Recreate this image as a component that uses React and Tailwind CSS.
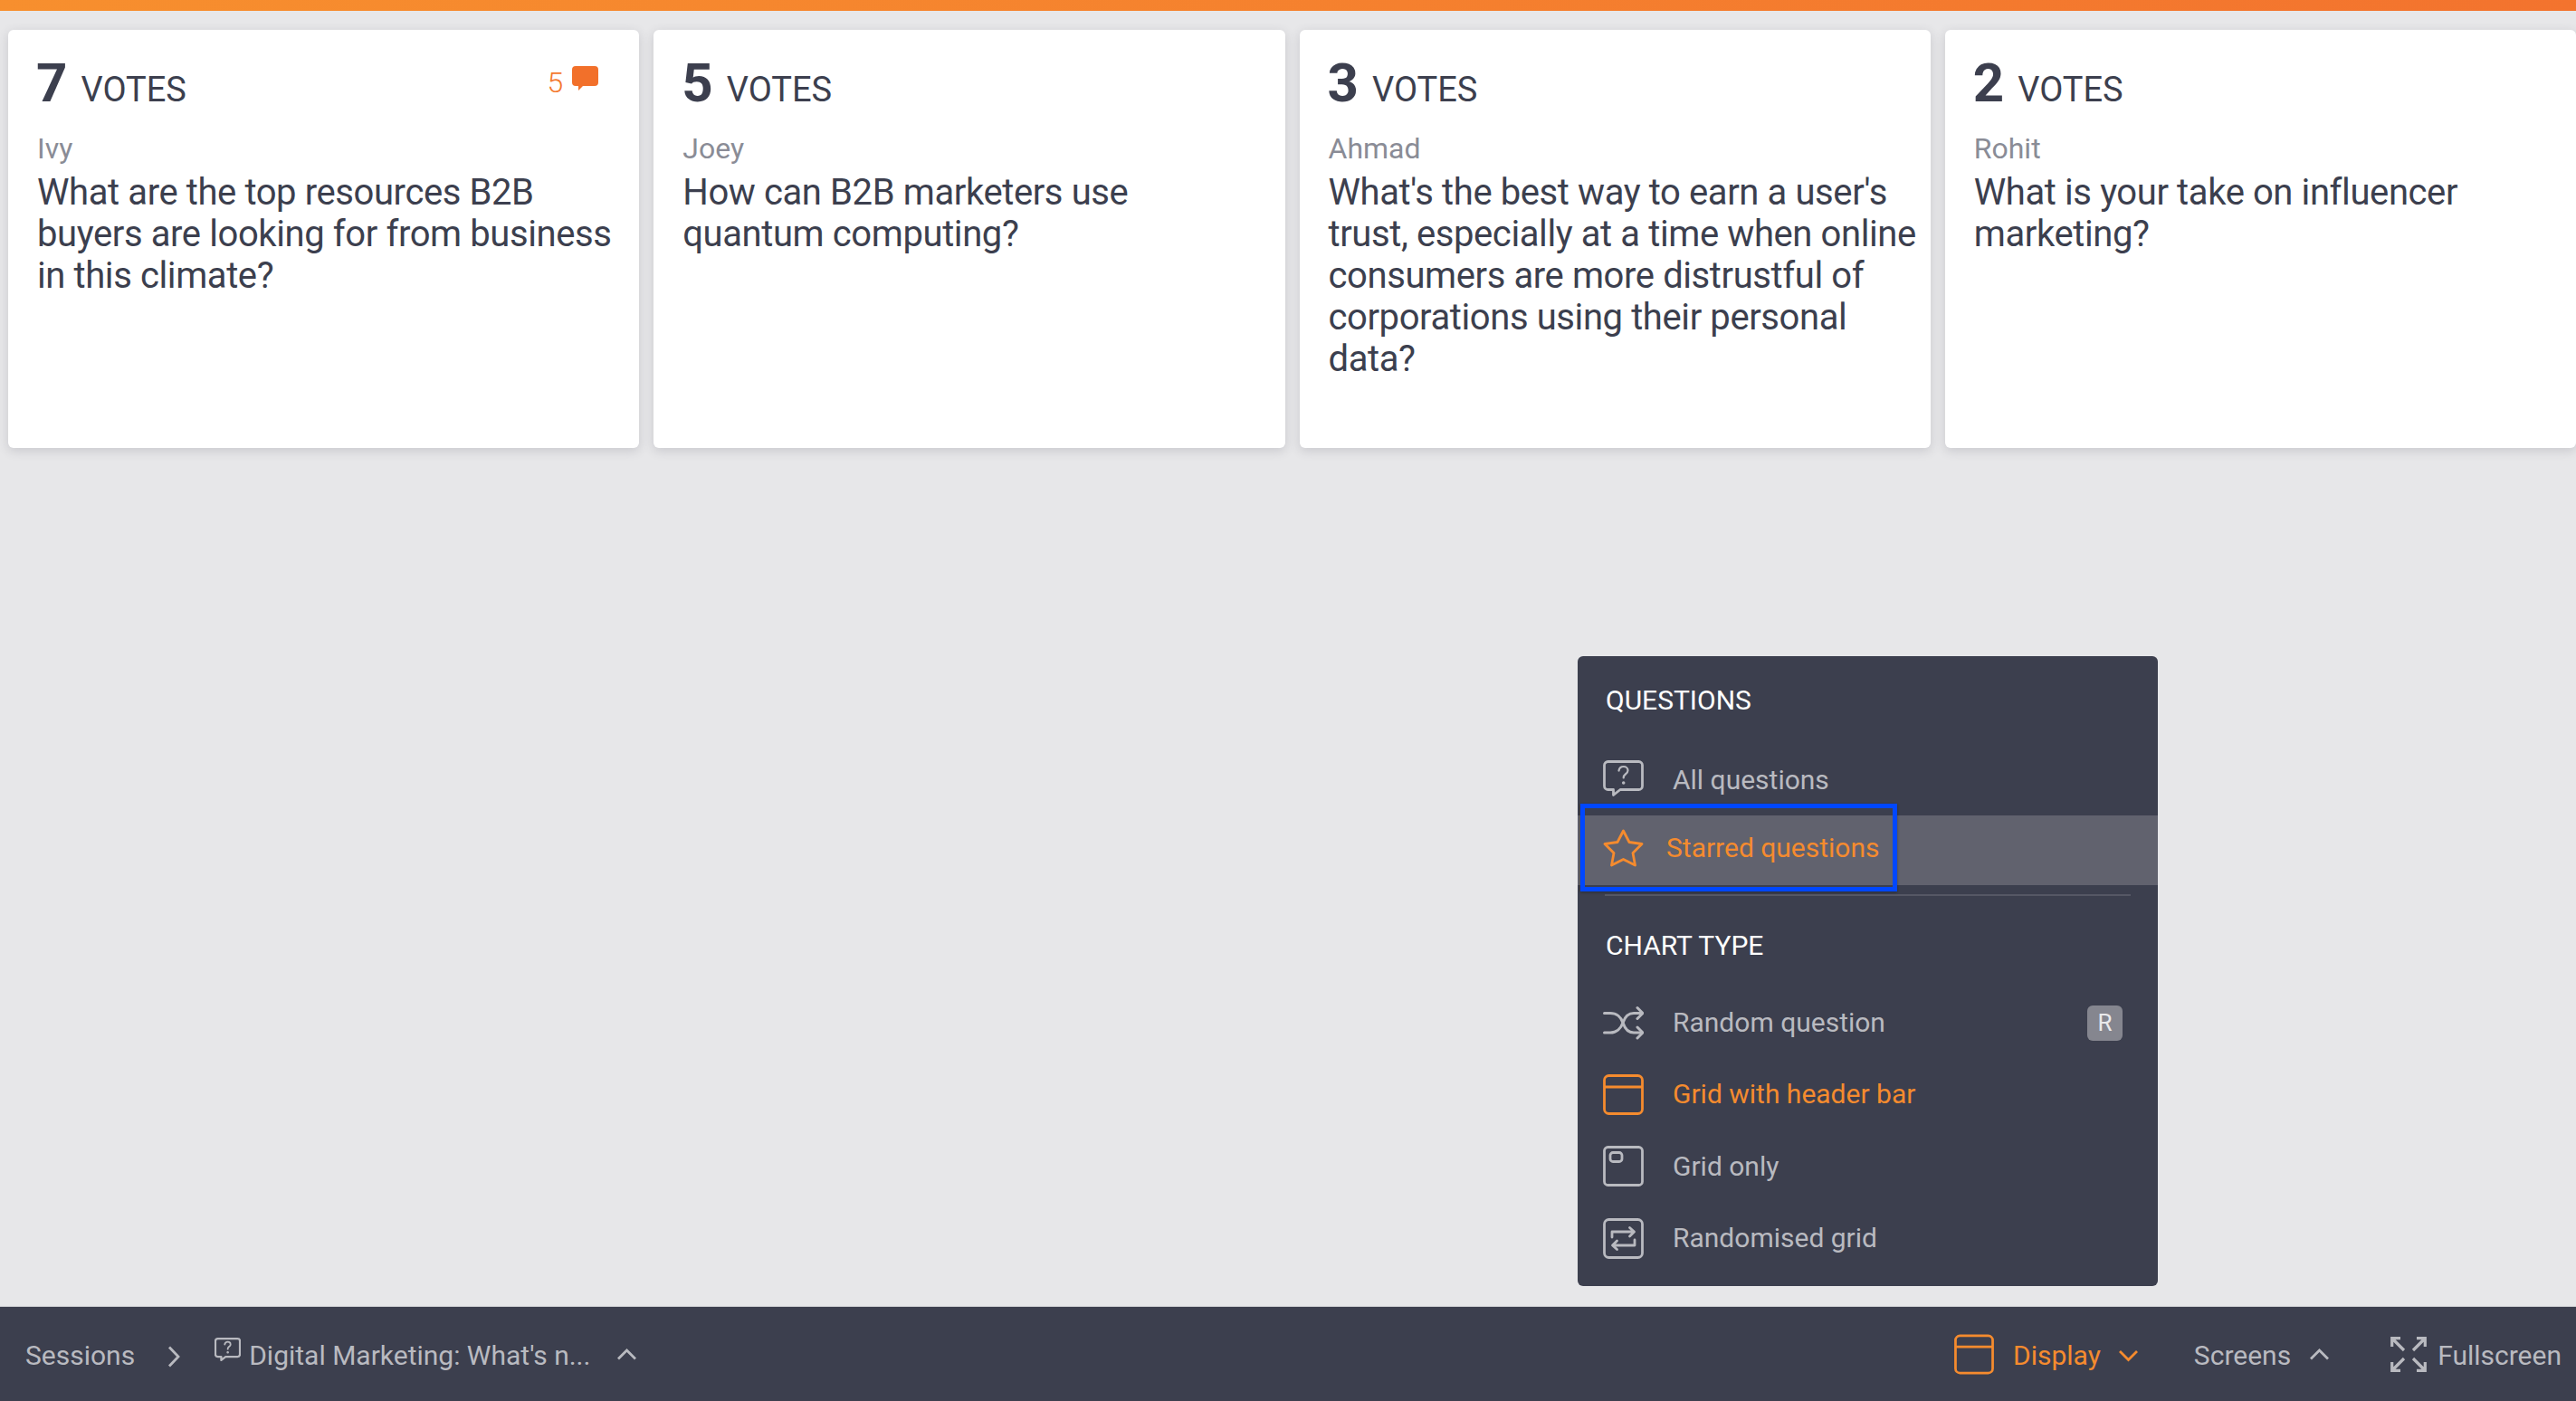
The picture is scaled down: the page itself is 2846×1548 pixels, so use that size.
import React from "react";

const ORANGE = "#f58b2e";
const GREY = "#b9bac0";

function Bubble({ className, color = GREY, sw = 2.8 }) {
  return (
    <svg viewBox="0 0 45 40" className={className} fill="none" stroke={color} strokeWidth={sw} strokeLinejoin="round" strokeLinecap="round">
      <path d="M5.500 1.500H39.500A4 4 0 0 1 43.500 5.500V28.500A4 4 0 0 1 39.500 32.500H19L11.500 38.500V32.500H5.500A4 4 0 0 1 1.500 28.500V5.500A4 4 0 0 1 5.500 1.500Z" />
      <path d="M17.500 11.500C18 8.500 20 7 22.700 7C25.500 7 27.500 8.800 27.500 11.300C27.500 13.300 26.300 14.400 24.800 15.500C23.400 16.500 22.700 17.400 22.700 19.500" strokeWidth={sw * 0.8} />
      <circle cx="22.700" cy="25" r="0.8" fill={color} strokeWidth={sw * 0.7} />
    </svg>
  );
}

function Star({ className }) {
  return (
    <svg viewBox="0 0 45 42" className={className} fill="none" stroke={ORANGE} strokeWidth="2.800" strokeLinejoin="round">
      <path d="M22.500 2L29 14.500L43 16.500L33 26.500L35.500 40L22.500 33.500L9.500 40L12 26.500L2 16.500L16 14.500Z" />
    </svg>
  );
}

function Shuffle({ className }) {
  return (
    <svg viewBox="0 0 45 38" className={className} fill="none" stroke={GREY} strokeWidth="3" strokeLinecap="round" strokeLinejoin="round">
      <path d="M1.500 8.500H8C15 8.500 20 13 22 19C20 25 15 30 8 30H1.500" />
      <path d="M42 8.500H34C28 8.500 24 13 22 19C24 25 28 30 34 30H42" />
      <path d="M38 2.500L44 8.500L38 14.500" />
      <path d="M38 24L44 30L38 36" />
    </svg>
  );
}

function Win({ className, color = ORANGE }) {
  return (
    <svg viewBox="0 0 45 45" className={className} fill="none" stroke={color} strokeWidth="2.800">
      <rect x="1.500" y="1.500" width="42" height="42" rx="5" />
      <path d="M1.500 14H43.500" />
    </svg>
  );
}

function GridOnly({ className }) {
  return (
    <svg viewBox="0 0 45 45" className={className} fill="none" stroke={GREY} strokeWidth="2.800">
      <rect x="1.500" y="1.500" width="42" height="42" rx="4" />
      <rect x="8" y="7.500" width="13" height="10" rx="3" />
    </svg>
  );
}

function RandGrid({ className }) {
  return (
    <svg viewBox="0 0 45 45" className={className} fill="none" stroke={GREY} strokeWidth="2.800" strokeLinecap="round" strokeLinejoin="round">
      <rect x="1.500" y="1.500" width="42" height="42" rx="5" />
      <path d="M10 21V15H34M29.500 10.500L34.500 15L29.500 20" />
      <path d="M35 24V30H11M15.500 25L10.500 30L15.500 34.500" />
    </svg>
  );
}

function Full({ className }) {
  return (
    <svg viewBox="0 0 40 39" className={className} fill="none" stroke={GREY} strokeWidth="3.200">
      <path d="M1.700 11V1.700H11M2 2L15 15" />
      <path d="M29 1.700H38.300V11M38 2L25 15" />
      <path d="M1.700 28V37.300H11M2 37L15 24" />
      <path d="M29 37.300H38.300V28M38 37L25 24" />
    </svg>
  );
}

function Chev({ dir, className, color = GREY }) {
  const d = { up: "M2 11.500L11.500 2L21 11.500", down: "M2 2L11.500 11.500L21 2" }[dir];
  return (
    <svg viewBox="0 0 23 14" className={className} fill="none" stroke={color} strokeWidth="2.800">
      <path d={d} />
    </svg>
  );
}

function Card({ votes, author, text, comments }) {
  return (
    <div className="bg-white rounded-[6px] shadow-[0_3px_12px_rgba(60,63,78,0.18)] pl-[32px] pr-[10px] pt-[28px] flex flex-col">
      <div className="flex items-baseline justify-between pr-[35px] h-[62px]">
        <div className="flex items-baseline text-[#3c3f4e]">
          <span className="text-[60px] leading-[62px] font-bold -ml-[1px]">{votes}</span>
          <span className="text-[38px] leading-[62px] ml-[15px]">VOTES</span>
        </div>
        {comments && (
          <div className="flex items-start text-[#f4792e] self-start mt-[12px]">
            <span className="text-[32px] leading-[36px] font-light">{comments}</span>
            <svg viewBox="0 0 29 27" className="w-[29px] h-[27px] ml-[10px]" fill="#f2702a">
              <path d="M4 0H25A4 4 0 0 1 29 4V18A4 4 0 0 1 25 22H12L7 27V22H4A4 4 0 0 1 0 18V4A4 4 0 0 1 4 0Z" />
            </svg>
          </div>
        )}
      </div>
      <div className="mt-[21px] text-[32px] leading-[40px] text-[#8a8c96]">{author}</div>
      <div className="mt-[6px] text-[40px] leading-[46px] tracking-[-0.4px] text-[#3c3f4e]">{text}</div>
    </div>
  );
}

function Row({ icon, children, color = "text-[#b9bac0]" }) {
  return (
    <div className="flex items-center h-[79.5px] pl-[28px]">
      <div className="w-[45px] flex justify-center">{icon}</div>
      <span className={`ml-[32px] text-[30px] leading-[36px] ${color}`}>{children}</span>
    </div>
  );
}

export default function App() {
  return (
    <div className="relative h-screen w-full overflow-hidden bg-[#e7e7e9] flex flex-col font-['Roboto',sans-serif]">
      <div className="h-[12px] shrink-0 bg-gradient-to-r from-[#f78f2e] to-[#f3732e]" />
      <div className="flex-1 min-h-0 pl-[9px] pt-[21px]">
        <div className="grid grid-cols-4 gap-[16px] h-[462px]">
          <Card votes="7" author="Ivy" comments="5" text="What are the top resources B2B buyers are looking for from business in this climate?" />
          <Card votes="5" author="Joey" text="How can B2B marketers use quantum computing?" />
          <Card votes="3" author="Ahmad" text="What's the best way to earn a user's trust, especially at a time when online consumers are more distrustful of corporations using their personal data?" />
          <Card votes="2" author="Rohit" text="What is your take on influencer marketing?" />
        </div>
      </div>

      <div className="absolute left-[1743px] top-[725px] w-[641px] h-[696px] rounded-[6px] bg-[#3c3f4e] pt-[31px] flex flex-col">
        <div className="pl-[31px] text-[30px] leading-[36px] text-white">QUESTIONS</div>
        <div className="mt-[30px] flex items-center h-[79px] pl-[28px]">
          <Bubble className="w-[45px] h-[40px] -mt-[4px]" />
          <span className="ml-[32px] text-[30px] leading-[36px] text-[#b9bac0]">All questions</span>
        </div>
        <div className="flex items-center h-[77px] pl-[28px] pb-[5px] bg-[#61626e]">
          <Star className="w-[45px] h-[42px]" />
          <span className="ml-[25px] text-[30px] leading-[36px] text-[#f58b2e]">Starred questions</span>
        </div>
        <div className="mt-[10px] mx-[30px] h-[2px] bg-[#565865]" />
        <div className="mt-[37px] pl-[31px] text-[30px] leading-[36px] text-white">CHART TYPE</div>
        <div className="mt-[27px]">
          <div className="relative">
            <Row icon={<Shuffle className="w-[45px] h-[38px]" />}>Random question</Row>
            <span className="absolute right-[39px] top-[21px] w-[39px] h-[39px] rounded-[6px] bg-[#85868f] text-[#e9e9eb] text-[26px] leading-[39px] text-center">R</span>
          </div>
          <Row color="text-[#f58b2e]" icon={<Win className="w-[45px] h-[45px]" />}>Grid with header bar</Row>
          <Row icon={<GridOnly className="w-[45px] h-[45px]" />}>Grid only</Row>
          <Row icon={<RandGrid className="w-[45px] h-[45px]" />}>Randomised grid</Row>
        </div>
      </div>

      <div className="absolute left-[1746px] top-[888px] w-[350px] h-[97px] border-[5px] border-[#0047ff] shadow-[0_1px_3px_rgba(0,0,0,0.3)]" />

      <div className="h-[105px] shrink-0 bg-[#3c3f4e] border-t border-[#d0d0d4] flex items-center justify-between pl-[28px] pr-[16px] text-[30px] leading-[36px] text-[#b9bac0]">
        <div className="flex items-center">
          <span className="mt-[3px]">Sessions</span>
          <svg viewBox="0 0 14 24" className="w-[14px] h-[24px] ml-[36px] mt-[6px]" fill="none" stroke={GREY} strokeWidth="2.800">
            <path d="M2 1.500L12 12L2 22.500" />
          </svg>
          <Bubble className="w-[29px] h-[28px] ml-[38px] -mt-[10px]" sw={3.500} />
          <span className="ml-[9px] mt-[3px]">Digital Marketing: What's n...</span>
          <Chev dir="up" className="w-[23px] h-[14px] ml-[29px] mt-[2px]" />
        </div>
        <div className="flex items-center">
          <Win className="w-[44px] h-[45px]" />
          <span className="ml-[21px] mt-[3px] text-[#f58b2e]">Display</span>
          <Chev dir="down" color={ORANGE} className="w-[23px] h-[14px] ml-[19px] mt-[4px]" />
          <span className="ml-[61px] mt-[3px]">Screens</span>
          <Chev dir="up" className="w-[23px] h-[14px] ml-[20px] mt-[2px]" />
          <Full className="w-[40px] h-[39px] ml-[67px]" />
          <span className="ml-[12px] mt-[3px]">Fullscreen</span>
        </div>
      </div>
    </div>
  );
}
